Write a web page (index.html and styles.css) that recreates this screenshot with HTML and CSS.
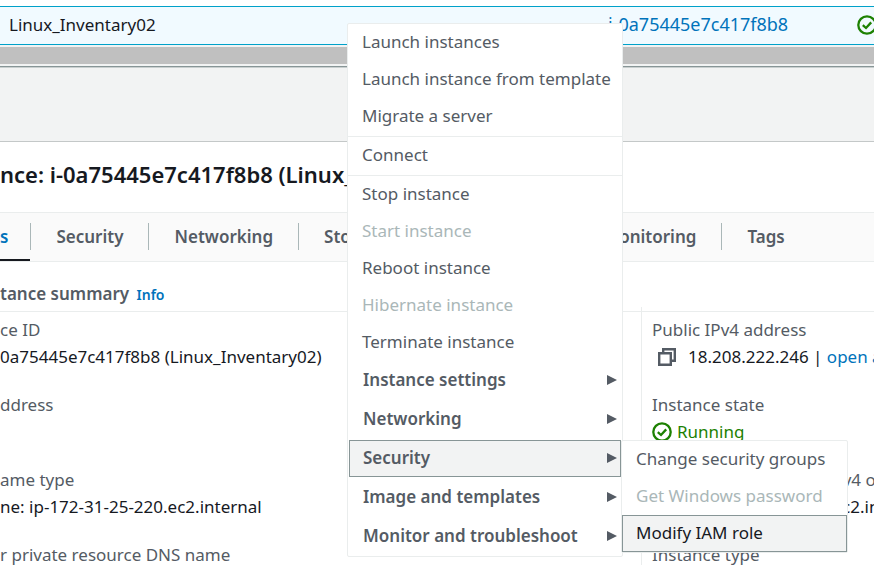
FILE: index.html
```html
<!DOCTYPE html>
<html lang="en">
<head>
<meta charset="utf-8">
<title>Instances</title>
<link rel="stylesheet" href="styles.css">
</head>
<body>
<svg class="defs" aria-hidden="true">
  <symbol id="ok" viewBox="0 0 20 20"><circle cx="10" cy="10" r="8.7"/><path d="M5.8 10.2 9 13l5.2-5.6"/></symbol>
  <symbol id="copy" viewBox="0 0 18 18"><path d="M1.2 5.2h11.6v11.6H1.2z"/><path d="M5.2 5V1.2h11.6v11.6H13"/></symbol>
  <symbol id="arrow" viewBox="0 0 10 10"><path d="M0 0v10l10-5z"/></symbol>
</svg>
<main>
  <div class="row">
    <span class="name">Linux_Inventary02</span>
    <a class="row-id" href="#">i-0a75445e7c417f8b8</a>
    <svg class="ok"><use href="#ok"/></svg>
  </div>
  <div class="scrollbar"></div>
  <div class="split"></div>
  <h1>nce: i-0a75445e7c417f8b8 (Linux_Inventary02)</h1>
  <nav class="tabs">
    <a class="tab active" href="#">s</a>
    <a class="tab" href="#">Security</a>
    <a class="tab" href="#">Networking</a>
    <a class="tab" href="#">Storage</a>
    <a class="tab" href="#">Status checks</a>
    <a class="tab" href="#">Monitoring</a>
    <a class="tab" href="#">Tags</a>
  </nav>
  <h2>tance summary <a class="info" href="#">Info</a></h2>
  <div class="details">
    <dl>
      <div><dt>ce ID</dt><dd>0a75445e7c417f8b8 (Linux_Inventary02)</dd></div>
      <div><dt>ddress</dt><dd></dd></div>
      <div><dt>ame type</dt><dd>ne: ip-172-31-25-220.ec2.internal</dd></div>
      <div><dt>r private resource DNS name</dt><dd></dd></div>
    </dl>
    <dl class="second">
      <div><dt>Public IPv4 address</dt><dd class="ip"><button class="copy" aria-label="Copy"><svg><use href="#copy"/></svg></button><span>18.208.222.246 | <a href="#">open address</a></span></dd></div>
      <div><dt>Instance state</dt><dd class="state"><svg class="ok"><use href="#ok"/></svg>Running</dd></div>
      <div><dt>Private IP DNS name (IPv4 only)</dt><dd class="ip host"><button class="copy" aria-label="Copy"><svg><use href="#copy"/></svg></button><span>ip-172-31-25-220.ec2.internal</span></dd></div>
      <div><dt>Instance type</dt><dd></dd></div>
    </dl>
  </div>
</main>
<div class="menu">
  <div class="section">
    <button>Launch instances</button>
    <button>Launch instance from template</button>
    <button>Migrate a server</button>
  </div>
  <div class="section">
    <button>Connect</button>
  </div>
  <div class="section last">
    <button>Stop instance</button>
    <button disabled>Start instance</button>
    <button>Reboot instance</button>
    <button disabled>Hibernate instance</button>
    <button>Terminate instance</button>
  </div>
  <div class="groups">
    <button>Instance settings <svg><use href="#arrow"/></svg></button>
    <button>Networking <svg><use href="#arrow"/></svg></button>
    <button class="selected">Security <svg><use href="#arrow"/></svg></button>
    <button>Image and templates <svg><use href="#arrow"/></svg></button>
    <button>Monitor and troubleshoot <svg><use href="#arrow"/></svg></button>
  </div>
</div>
<div class="menu submenu">
  <button>Change security groups</button>
  <button disabled>Get Windows password</button>
  <button class="selected">Modify IAM role</button>
</div>
</body>
</html>
```
FILE: styles.css
```css
* { box-sizing: border-box; }
body {
  margin: 0;
  height: 100vh;
  overflow: hidden;
  position: relative;
  background: #fff;
  color: #16191f;
  font: 17px/27px "Noto Sans", sans-serif;
  white-space: nowrap;
}
main { padding-top: 6px; }
a { color: #0073bb; text-decoration: none; }
svg { display: block; fill: none; flex: none; }
.defs { position: absolute; width: 0; height: 0; }
.row {
  height: 39px;
  display: flex;
  align-items: center;
  padding: 0 0 2px 9px;
  background: #f1faff;
  border: solid #00a1c9;
  border-width: 1px 0;
}
.name { width: 599px; }
.row-id { width: 249px; font-size: 18px; }
.ok { width: 20px; height: 20px; stroke: #1d8102; stroke-width: 2.3; }
.row .ok { overflow: visible; margin-left: auto; margin-right: -3px; }
.scrollbar {
  height: 21px;
  background: #c0c0c0;
  border: solid #f2f3f3;
  border-width: 2px 0;
}
.split {
  height: 76px;
  background: #f2f3f3;
  border-top: 1px solid #879596;
  border-bottom: 1px solid #c4c8c8;
  box-shadow: inset 0 1px #c9cfcf;
}
h1 {
  margin: 0;
  padding: 19px 0 24px;
  font-size: 22px;
  line-height: 27px;
  font-weight: 600;
}
.tabs {
  display: flex;
  height: 50px;
  background: #fafafa;
  border: solid #eaeded;
  border-width: 1px 0;
}
.tab {
  position: relative;
  padding: 10px 25px 9px 26px;
  color: #545b64;
  font-weight: 600;
}
.tab + .tab::before {
  content: "";
  position: absolute;
  left: 0;
  top: 10px;
  height: 27px;
  border-left: 1px solid #aab7b8;
}
.tab.active {
  padding-left: 0;
  padding-right: 22px;
  color: #0073bb;
  border-bottom: 2px solid #16191f;
}
h2 {
  margin: 0;
  padding: 18px 0 3px;
  font-size: 17px;
  line-height: 27px;
  font-weight: 600;
  color: #545b64;
  border-bottom: 1px solid #eaeded;
}
.info { font-size: 14px; margin-left: 3px; }
.details {
  display: grid;
  grid-template-columns: 641px 1fr;
}
dl {
  margin: 0;
  padding-top: 4px;
  display: grid;
  align-content: start;
  gap: 21px;
}
dt { color: #545b64; }
dd { margin: 0; min-height: 27px; }
.second {
  margin-top: -5px;
  padding: 9px 0 0 10px;
  border-left: 1px solid #eaeded;
}
.ip, .state { display: flex; align-items: center; }
.ip { padding-left: 6px; gap: 12px; }
.host { gap: 18px; }
.state { gap: 5px; color: #1d8102; }
.copy { border: 0; padding: 0; background: none; }
.copy svg { width: 18px; height: 18px; stroke: #545b64; stroke-width: 2.4; }
.menu {
  position: absolute;
  left: 347px;
  top: 23px;
  width: 276px;
  background: #fff;
  border: 1px solid #eaeded;
  border-radius: 2px;
}
.menu button {
  display: flex;
  justify-content: space-between;
  align-items: center;
  width: 100%;
  height: 37px;
  padding: 0 13px 2px;
  border: 1px solid transparent;
  background: none;
  color: #545b64;
  font: inherit;
  text-align: left;
}
.menu button:disabled { color: #aab7b8; }
.section { padding-bottom: 1px; }
.section + .section { border-top: 1px solid #eaeded; }
.section.last { padding-bottom: 0; }
.groups { display: grid; gap: 2px; padding: 1px; }
.menu .groups button { font-weight: 600; padding-right: 3px; }
.groups svg { width: 10px; height: 10px; fill: #545b64; }
.menu .selected { background: #f2f3f3; border-color: #879596; }
.submenu { left: 621px; top: 440px; width: 227px; }
.submenu .selected { color: #16191f; }
```
